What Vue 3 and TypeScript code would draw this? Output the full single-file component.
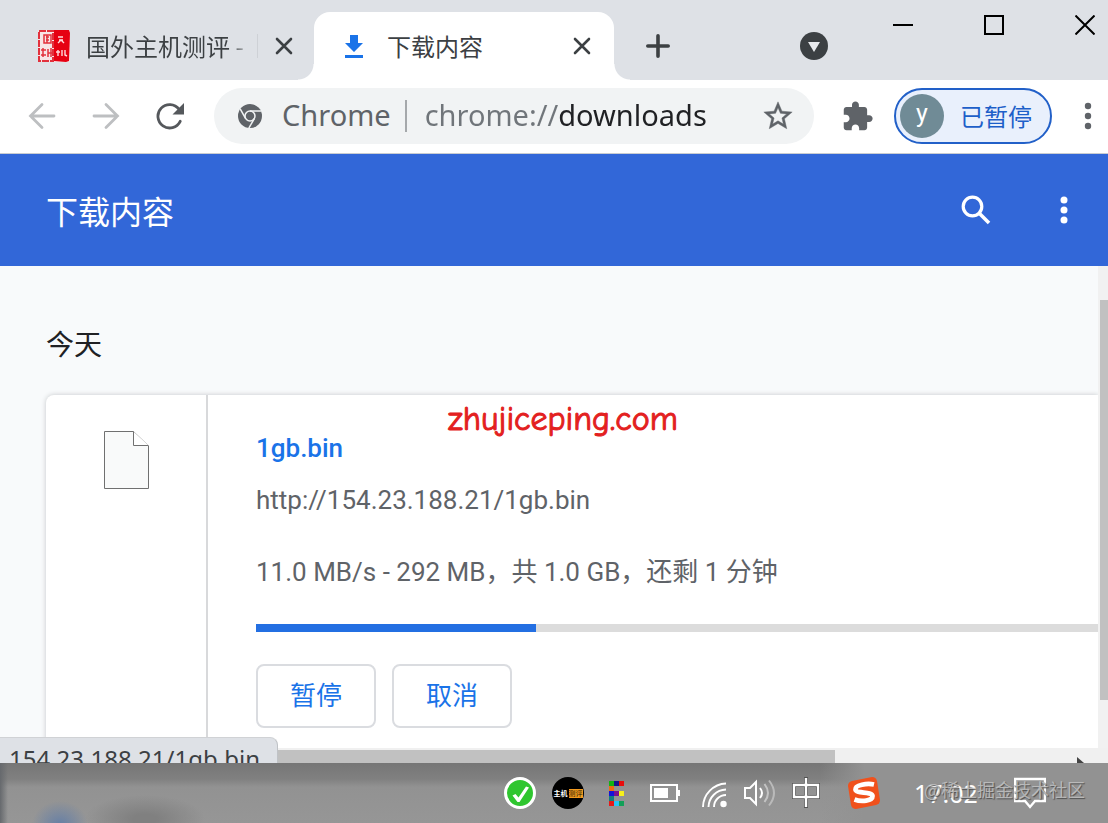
<script setup lang="ts">
import { ref } from 'vue'

const address = ref('chrome://downloads')

const item = {
  name: '1gb.bin',
  url: 'http://154.23.188.21/1gb.bin',
  status: '11.0 MB/s - 292 MB，共 1.0 GB，还剩 1 分钟',
}

const pixels: [number, number, string][] = [
  [0, 0, '#12b312'], [1, 0, '#14148c'], [2, 0, '#e80c0c'],
  [0, 1, '#f06a10'],
  [0, 2, '#1414d8'], [1, 2, '#7a1090'], [2, 2, '#f6f01c'],
  [0, 3, '#108080'],
  [0, 4, '#e81818'], [1, 4, '#28c4f4'], [2, 4, '#12a058'],
]
</script>

<template>
  <div class="window">
    <header class="tabstrip">
      <div class="tab">
        <svg class="favicon" viewBox="0 0 32 32" aria-hidden="true">
          <rect width="32" height="32" rx="2" fill="#f8e4e6" />
          <path d="M1 1h14v30H1z" fill="none" stroke="#e2303c" stroke-width="2" stroke-dasharray="7 1" />
          <path d="M16 0h15l1 3-1 28-3 1-12-1z" fill="#e60012" />
          <path d="M6 5h7v8H6zM8 7h3M8 10h3M9 5v8M5 18v9M3 20h5M3 25h5M10 19v8M10 23h4M13 18v9" fill="none" stroke="#e2303c" stroke-width="1.5" />
          <path d="M20 7h5M21 10h4M20 13l3-3 3 3M20 20v6M18 22h4M24 20v6M27 20v5l2 1" fill="none" stroke="#ffd9dc" stroke-width="1.4" />
        </svg>
        <button class="tab-title faded" type="button">国外主机测评 - </button>
        <span class="tab-sep"></span>
        <button class="close" type="button" aria-label="关闭">
          <svg viewBox="0 0 20 20"><path d="M3 3l14 14M17 3L3 17" stroke="#3c4043" stroke-width="2.6" stroke-linecap="round" /></svg>
        </button>
      </div>
      <div class="tab active">
        <svg class="dl" viewBox="0 0 18 23" aria-hidden="true">
          <path d="M5 0h8v8h5l-9 9-9-9h5zM0 20h18v3H0z" fill="#1a73e8" />
        </svg>
        <button class="tab-title" type="button">下载内容</button>
        <button class="close" type="button" aria-label="关闭">
          <svg viewBox="0 0 20 20"><path d="M3 3l14 14M17 3L3 17" stroke="#3c4043" stroke-width="2.6" stroke-linecap="round" /></svg>
        </button>
      </div>
      <button class="newtab" type="button" aria-label="打开新的标签页">
        <svg viewBox="0 0 24 24"><path d="M12 1.8v20.4M1.8 12h20.4" stroke="#3c4043" stroke-width="3.6" stroke-linecap="round" /></svg>
      </button>
      <button class="tabsearch" type="button" aria-label="搜索标签页">
        <svg viewBox="0 0 28 28"><circle cx="14" cy="14" r="14" fill="#3c4043" /><path d="M8 10h12l-6 10z" fill="#e8eaed" /></svg>
      </button>
      <div class="controls">
        <button type="button" aria-label="最小化"><svg viewBox="0 0 20 20"><path d="M0 10h20" stroke="#000" stroke-width="2" /></svg></button>
        <button type="button" aria-label="最大化"><svg viewBox="0 0 20 20"><path d="M1 1h18v18H1z" fill="none" stroke="#000" stroke-width="2" /></svg></button>
        <button type="button" aria-label="关闭窗口"><svg viewBox="0 0 20 20"><path d="M.5 .5l19 19M19.5 .5l-19 19" stroke="#000" stroke-width="2" /></svg></button>
      </div>
    </header>

    <nav class="toolbar">
      <button class="nav" type="button" aria-label="后退">
        <svg viewBox="0 0 28 28"><path d="M26 14H2.5M14 2.500L2.500 14 14 25.500" fill="none" stroke="#bdbfc1" stroke-width="2.800" stroke-linecap="round" /></svg>
      </button>
      <button class="nav" type="button" aria-label="前进">
        <svg viewBox="0 0 28 28"><path d="M2 14h23.500M14 2.500L25.500 14 14 25.500" fill="none" stroke="#bdbfc1" stroke-width="2.800" stroke-linecap="round" /></svg>
      </button>
      <button class="nav" type="button" aria-label="重新加载">
        <svg viewBox="0 0 28 28">
          <path d="M24.200 19.300A11.700 11.700 0 1 1 23 7.200" fill="none" stroke="#55585c" stroke-width="2.800" stroke-linecap="round" />
          <path d="M28 1v11.500h-11.500z" fill="#55585c" />
        </svg>
      </button>
      <div class="omnibox">
        <svg class="chrome" viewBox="0 0 24 24" aria-hidden="true">
          <circle cx="12" cy="12" r="12" fill="#5f6368" />
          <g fill="none" stroke="#f1f3f4" stroke-width="1.500">
            <circle cx="12" cy="12" r="5" />
            <path d="M12 7h11" />
            <path d="M12 7h11" transform="rotate(120 12 12)" />
            <path d="M12 7h11" transform="rotate(240 12 12)" />
          </g>
        </svg>
        <label class="scheme" for="address">Chrome</label>
        <span class="bar"></span>
        <input id="address" v-model="address" class="address" type="text" spellcheck="false" />
        <button class="star" type="button" aria-label="添加书签">
          <svg viewBox="0 0 24 24"><path fill="#5f6368" stroke="#5f6368" stroke-width=".3" d="M22 9.240l-7.190-.620L12 2 9.190 8.630 2 9.240l5.460 4.730L5.820 21 12 17.270 18.180 21l-1.630-7.030L22 9.240zM12 15.400l-3.760 2.270 1-4.280-3.320-2.880 4.380-.380L12 6.100l1.710 4.040 4.380.380-3.320 2.880 1 4.280L12 15.400z" /></svg>
        </button>
      </div>
      <button class="ext" type="button" aria-label="扩展程序">
        <svg viewBox="0 0 24 24"><path fill="#5f6368" d="M20.500 11H19V7c0-1.100-.900-2-2-2h-4V3.500C13 2.120 11.880 1 10.500 1S8 2.120 8 3.500V5H4c-1.100 0-1.990.900-1.990 2v3.800H3.500c1.490 0 2.700 1.210 2.700 2.700s-1.210 2.700-2.700 2.700H2V20c0 1.100.900 2 2 2h3.800v-1.500c0-1.490 1.210-2.700 2.700-2.700s2.700 1.210 2.700 2.700V22H17c1.100 0 2-.900 2-2v-4h1.500c1.380 0 2.500-1.120 2.500-2.500S21.880 11 20.500 11z" /></svg>
      </button>
      <button class="profile" type="button">
        <span class="avatar">y</span>
        <span class="paused">已暂停</span>
      </button>
      <button class="menu" type="button" aria-label="更多">
        <svg viewBox="0 0 8 28"><g fill="#5f6368"><circle cx="4" cy="4" r="3.200" /><circle cx="4" cy="14" r="3.200" /><circle cx="4" cy="24" r="3.200" /></g></svg>
      </button>
    </nav>

    <div class="appbar">
      <h1>下载内容</h1>
      <button class="search" type="button" aria-label="搜索下载内容">
        <svg viewBox="0 0 30 30"><circle cx="11.500" cy="11.500" r="9.300" fill="none" stroke="#fff" stroke-width="3.200" /><path d="M18.500 18.500l9.500 9.500" stroke="#fff" stroke-width="3.600" /></svg>
      </button>
      <button class="more" type="button" aria-label="更多操作">
        <svg viewBox="0 0 8 28"><g fill="#fff"><circle cx="4" cy="4" r="3.500" /><circle cx="4" cy="14" r="3.500" /><circle cx="4" cy="24" r="3.500" /></g></svg>
      </button>
    </div>

    <div class="body">
      <main class="view">
        <h2>今天</h2>
        <article class="card">
          <div class="thumb">
            <svg viewBox="0 0 46 59" aria-hidden="true">
              <path d="M1.500 .5h29l15 14.500v42.500h-44z" fill="#f9fafa" stroke="#707070" />
              <path d="M30.500 .5V14.500h15" fill="#fff" stroke="#707070" />
            </svg>
          </div>
          <div class="details">
            <a class="name" href="#">{{ item.name }}</a>
            <a class="url" href="#">{{ item.url }}</a>
            <p class="status">{{ item.status }}</p>
            <div class="progress"><div class="done"></div></div>
            <div class="actions">
              <button type="button">暂停</button>
              <button type="button">取消</button>
            </div>
          </div>
          <span class="stamp">zhujiceping.com</span>
        </article>
      </main>
      <div class="vscroll">
        <div class="vthumb"></div>
      </div>
      <div class="hscroll">
        <div class="hthumb"></div>
        <svg viewBox="0 0 7 12" aria-hidden="true"><path d="M0 0l7 6-7 6z" fill="#444" /></svg>
      </div>
      <div class="bubble">154.23.188.21/1gb.bin</div>
    </div>

    <footer class="taskbar">
      <svg class="tray" viewBox="0 0 32 32"><circle cx="16" cy="16" r="14.500" fill="#2fc62f" stroke="#fff" stroke-width="3" /><path d="M8.500 18.500l3-1.500 3 3.500L22 9.500l3 1-9.500 14.500h-2z" fill="#fff" /></svg>
      <span class="badge"><b>主机</b><i>测评</i></span>
      <svg class="tray" viewBox="0 0 32 32">
        <rect v-for="(p, i) in pixels" :key="i" :x="9 + p[0] * 5" :y="4 + p[1] * 5" width="5" height="5" :fill="p[2]" />
      </svg>
      <svg class="tray" viewBox="0 0 32 32"><path d="M3 8h26v16H3z" fill="none" stroke="#fff" stroke-width="2" /><path d="M6 11h14v10H6zM29 13h3v6h-3z" fill="#fff" /></svg>
      <svg class="tray" viewBox="0 0 32 32">
        <circle cx="27.500" cy="27" r="3.200" fill="#fff" />
        <g fill="none" stroke="#fff" stroke-width="1.900"><path d="M7 30A24 24 0 0 1 30 6.500" /><path d="M12.500 30A18 18 0 0 1 30 12.500" /><path d="M18 30A12 12 0 0 1 30 18" /></g>
      </svg>
      <svg class="tray" viewBox="0 0 32 32">
        <path d="M1 11h5l6-6v22l-6-6H1z" fill="none" stroke="#fff" stroke-width="2" />
        <g fill="none" stroke-width="2"><path d="M16 11q4 5 0 10" stroke="#fff" /><path d="M20.500 7q7 9 0 18" stroke="#c4c4c4" /><path d="M25 3.500q10 12.500 0 25" stroke="#bababa" /></g>
      </svg>
      <svg class="tray" viewBox="0 0 32 32" aria-label="中文输入">
        <g fill="none"><path d="M2 8h24v12H2zM14 0v31" stroke="#555" stroke-width="4" /><path d="M2 8h24v12H2zM14 1v29" stroke="#fff" stroke-width="2.400" /></g>
      </svg>
      <svg class="tray sogou" viewBox="0 0 32 32">
        <path d="M4 4l20-4q4 0 5 4l3 19q0 4-4 5L8 32q-4 0-5-4L0 9q0-4 4-5z" fill="#f0511c" />
        <path d="M26 7.500C19 6 7 8 7.500 12.500 8 17 24 14 24.500 19c0 5-11 6-18 3.500" fill="none" stroke="#fff" stroke-width="4.800" />
      </svg>
      <time class="clock">17:02</time>
      <svg class="tray note" viewBox="0 0 32 32"><path d="M1 2h30v22H21l-5 6-5-6H1z" fill="none" stroke="#fff" stroke-width="2.400" /></svg>
      <span class="credit">@稀土掘金技术社区</span>
    </footer>
  </div>
</template>

<style>
html, body { height: 100%; }
body { margin: 0; overflow: hidden; }
#app { height: 100%; }
</style>

<style scoped>
.window {
  display: flex;
  flex-direction: column;
  height: 100%;
  background: #fff;
  font-family: "Noto Sans", "Noto Sans CJK SC", sans-serif;
  color: #3c4043;
}
button {
  padding: 0;
  border: 0;
  background: none;
  font: inherit;
  color: inherit;
  display: flex;
  align-items: center;
  justify-content: center;
  flex: none;
}
svg { display: block; flex: none; }

.tabstrip {
  display: flex;
  align-items: flex-end;
  height: 80px;
  flex: none;
  background: #dee1e6;
}
.tab {
  display: flex;
  align-items: center;
  box-sizing: border-box;
  height: 68px;
  width: 314px;
  padding: 0 20px 0 38px;
}
.favicon { width: 32px; height: 32px; margin-right: 16px; }
.tab-title {
  flex: 1;
  min-width: 0;
  justify-content: flex-start;
  overflow: hidden;
  white-space: nowrap;
  font: 24px/36px "Noto Sans CJK SC", sans-serif;
}
.faded { color: transparent; background: linear-gradient(90deg, #3c4043 144px, #b4b7bb 160px); background-clip: text; }
.tab-sep { width: 1px; height: 24px; margin-right: 16px; background: #ced1d6; }
.close, .close svg { width: 20px; height: 20px; }
.active {
  position: relative;
  width: 300px;
  padding: 0 22px 0 31px;
  background: #fff;
  border-radius: 16px 16px 0 0;
}
.active::before, .active::after {
  content: "";
  position: absolute;
  bottom: 0;
  width: 16px;
  height: 16px;
}
.active::before { left: -16px; background: radial-gradient(circle at 0 0, transparent 15px, #fff 16px); }
.active::after { right: -16px; background: radial-gradient(circle at 100% 0, transparent 15px, #fff 16px); }
.dl { width: 18px; height: 23px; margin-right: 24px; }
.newtab { width: 40px; height: 68px; margin-left: 24px; }
.newtab svg { width: 24px; height: 24px; }
.tabsearch { width: 28px; height: 68px; margin-left: auto; margin-right: 65px; }
.tabsearch svg { width: 28px; height: 28px; }
.controls { display: flex; gap: 71px; align-self: flex-start; padding: 15px 13px 0 0; }
.controls svg { width: 20px; height: 20px; }

.toolbar {
  display: flex;
  align-items: center;
  box-sizing: border-box;
  height: 74px;
  flex: none;
  padding: 0 0 1px 10px;
  border-bottom: 1px solid #c9ccd1;
}
.nav { width: 64px; height: 56px; }
.nav svg { width: 28px; height: 28px; }
.omnibox {
  display: flex;
  align-items: center;
  flex: 1;
  min-width: 0;
  box-sizing: border-box;
  height: 56px;
  margin-left: 12px;
  padding: 0 19px 0 24px;
  border-radius: 28px;
  background: #f1f3f4;
  font: 29px/40px "Noto Sans", sans-serif;
}
.chrome { width: 24px; height: 24px; }
.scheme { margin-left: 20px; padding-bottom: 2px; color: #5f6368; }
.bar { width: 2px; height: 32px; margin: 0 18px 0 14px; background: #a5a8ab; }
.address {
  flex: 1;
  min-width: 0;
  padding: 0 0 2px;
  border: 0;
  outline: 0;
  font: inherit;
  color: transparent;
  background: linear-gradient(90deg, #70757a 134px, #202124 134px);
  background-clip: text;
}
.star svg { width: 34px; height: 34px; }
.ext { width: 64px; height: 56px; margin: 0 5px 0 11px; }
.ext svg { width: 33px; height: 33px; }
.profile {
  box-sizing: border-box;
  height: 56px;
  padding: 0 18px 0 4px;
  gap: 16px;
  border: 2px solid #2260c8;
  border-radius: 28px;
  background: #e9f0fc;
}
.avatar {
  width: 44px;
  height: 44px;
  border-radius: 50%;
  background: #708b96;
  color: #fff;
  font: 25px/40px Roboto, sans-serif;
}
.paused { color: #1d5fc9; font: 24px/36px "Noto Sans CJK SC", sans-serif; }
.menu { width: 40px; height: 56px; margin-left: 16px; }
.menu svg, .more svg { width: 8px; height: 28px; }

.appbar {
  display: flex;
  align-items: center;
  height: 112px;
  flex: none;
  padding-left: 46px;
  background: #3267d8;
  color: #fff;
}
h1 { flex: 1; margin: 0; font: 32px/48px "Noto Sans CJK SC", sans-serif; }
.search { width: 64px; height: 64px; }
.search svg { width: 30px; height: 30px; }
.more { width: 64px; height: 64px; margin: 0 12px 0 24px; }

.body {
  position: relative;
  display: grid;
  grid-template: minmax(0, 1fr) 15px / minmax(0, 1fr) 10px;
  flex: 1;
  min-height: 0;
  overflow: hidden;
  background: #f8fafb;
}
.view { overflow: hidden; padding: 55px 0 0 46px; display: flex; flex-direction: column; }
h2 { margin: 0 0 30px; font: 28px/44px "Noto Sans CJK SC", sans-serif; color: #202124; }
.card {
  position: relative;
  display: flex;
  flex: 1;
  background: #fff;
  border-radius: 8px 0 0 0;
  box-shadow: 0 0 5px 0 #c4c7ca;
}
.thumb {
  display: flex;
  justify-content: center;
  width: 160px;
  padding-top: 36px;
  border-right: 2px solid #d8d9db;
}
.thumb svg { width: 46px; height: 59px; }
.details {
  display: flex;
  flex-direction: column;
  align-items: flex-start;
  flex: 1;
  min-width: 0;
  padding: 35px 0 0 48px;
  font: 26px/36px Roboto, "Noto Sans CJK SC", sans-serif;
  color: #5f6368;
}
.details a { text-decoration: none; color: inherit; }
.details .name { font-weight: 500; color: #1a73e8; }
.url { margin-top: 16px; }
.status { margin: 36px 0 0; white-space: nowrap; }
.progress { align-self: stretch; height: 8px; margin: 34px 0 32px; background: #dcdcdc; }
.done { width: 280px; height: 8px; background: #236fe2; }
.actions { display: flex; gap: 16px; }
.actions button {
  box-sizing: border-box;
  width: 120px;
  height: 64px;
  border: 2px solid #dadce0;
  border-radius: 8px;
  color: #1a73e8;
}
.stamp {
  position: absolute;
  left: 402px;
  top: 4px;
  color: #e32020;
  font: 34px/40px "Comic Sans MS", "Comic Neue", "Open Sans", sans-serif;
  -webkit-text-stroke: 1px #e32020;
}
.vscroll { background: #f1f1f1; padding: 34px 0 48px 2px; box-sizing: border-box; }
.vthumb { height: 100%; background: #c1c1c1; }
.hscroll {
  grid-column: 1 / -1;
  display: flex;
  align-items: flex-start;
  justify-content: space-between;
  padding-right: 24px;
  background: #f0f0f0;
}
.hthumb { width: 77%; height: 13px; margin-top: 2px; background: #c1c1c1; }
.hscroll svg { width: 7px; height: 12px; margin-top: 9px; }
.bubble {
  position: absolute;
  left: 0;
  bottom: -18px;
  height: 40px;
  padding: 3px 17px 0 9px;
  border-top: 1px solid #d0d2d5;
  border-right: 1px solid #bfc2c6;
  border-radius: 0 8px 0 0;
  background: #dee1e6;
  font: 24px/36px "Noto Sans", sans-serif;
}

.taskbar {
  position: relative;
  display: flex;
  align-items: center;
  justify-content: flex-end;
  gap: 16px;
  box-sizing: border-box;
  height: 60px;
  flex: none;
  padding-right: 62px;
  overflow: hidden;
  background:
    radial-gradient(ellipse 28px 24px at 60px 62px, #6a81a4 10%, transparent),
    radial-gradient(ellipse 60px 24px at 145px 56px, #808080 20%, transparent),
    linear-gradient(90deg, #66696d, transparent 8px),
    linear-gradient(90deg, transparent 74%, #929292 78%),
    linear-gradient(#767676, #808080 16px, #929292 24px, #969696);
}
.tray { width: 32px; height: 32px; }
.badge {
  display: flex;
  align-items: center;
  justify-content: center;
  gap: 1px;
  width: 32px;
  height: 32px;
  border-radius: 50%;
  background: #000;
  color: #fff;
  font: 7px/9px "Noto Sans CJK SC", sans-serif;
  white-space: nowrap;
}
.badge i { background: #f29a1f; color: #201000; font-style: normal; }
.sogou { margin-left: 8px; }
.clock { width: 65px; margin-left: 18px; font: 25px/32px "Noto Sans", sans-serif; color: #fff; }
.note { margin-left: 19px; }
.credit {
  position: absolute;
  right: 23px;
  top: 12px;
  font: 18px/28px "Noto Sans CJK SC", sans-serif;
  color: rgba(200, 200, 200, 0.8);
  text-shadow: 1px 1px 1px #505050;
}
</style>
